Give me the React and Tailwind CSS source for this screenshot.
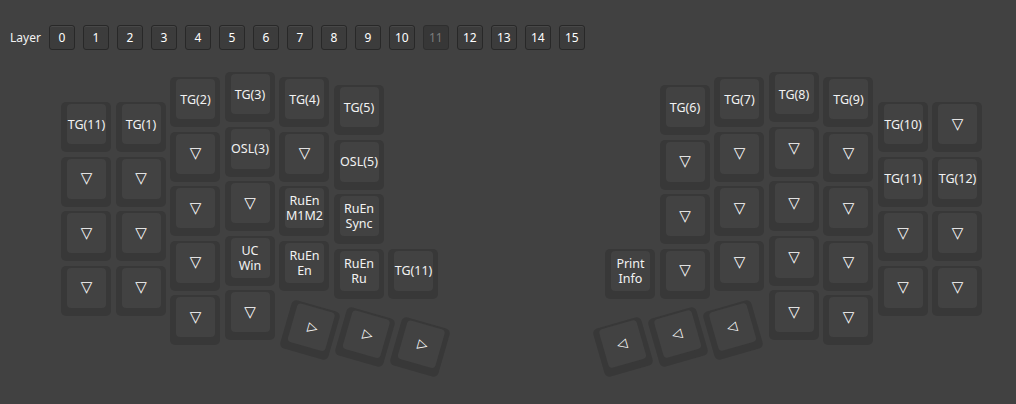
import React from "react";

const LEFT = [
  [61, [[102, "TG(11)"], [156.5, "▽"], [211, "▽"], [265.5, "▽"]]],
  [115.5, [[102, "TG(1)"], [156.5, "▽"], [211, "▽"], [265.5, "▽"]]],
  [170, [[77, "TG(2)"], [131.5, "▽"], [186, "▽"], [240.5, "▽"], [295, "▽"]]],
  [224.5, [[72, "TG(3)"], [126.5, "OSL(3)"], [181, "▽"], [235.5, "UC\nWin"], [290, "▽"]]],
  [279, [[77, "TG(4)"], [131.5, "▽"], [186, "RuEn\nM1M2"], [240.5, "RuEn\nEn"]]],
  [333.5, [[85, "TG(5)"], [139.5, "OSL(5)"], [194, "RuEn\nSync"], [248.5, "RuEn\nRu"]]],
  [388, [[248.5, "TG(11)"]]],
];

const RIGHT = [
  [605, [[248.5, "Print\nInfo"]]],
  [659.5, [[85, "TG(6)"], [139.5, "▽"], [194, "▽"], [248.5, "▽"]]],
  [714, [[77, "TG(7)"], [131.5, "▽"], [186, "▽"], [240.5, "▽"]]],
  [768.5, [[72, "TG(8)"], [126.5, "▽"], [181, "▽"], [235.5, "▽"], [290, "▽"]]],
  [823, [[77, "TG(9)"], [131.5, "▽"], [186, "▽"], [240.5, "▽"], [295, "▽"]]],
  [877.5, [[102, "TG(10)"], [156.5, "TG(11)"], [211, "▽"], [265.5, "▽"]]],
  [932, [[102, "▽"], [156.5, "TG(12)"], [211, "▽"], [265.5, "▽"]]],
];

const THUMBS = [
  { x: 285.3, y: 305, r: 16 },
  { x: 339.6, y: 312.3, r: 16 },
  { x: 395.3, y: 321.6, r: 16 },
  { x: 993 - 395.3, y: 321.6, r: -16 },
  { x: 993 - 339.6, y: 312.3, r: -16 },
  { x: 993 - 285.3, y: 305, r: -16 },
];

const TOP = 50;

function Label({ text, glyphRot }) {
  if (text === "▽") {
    return (
      <span
        className={
          glyphRot
            ? "block text-[13px] leading-[13px] text-white"
            : "block text-[15px] leading-[15px] text-white"
        }
        style={{
          fontFamily: '"DejaVu Sans", sans-serif',
          transform: glyphRot ? `rotate(${glyphRot}deg)` : undefined,
        }}
      >
        ▽
      </span>
    );
  }
  const lines = text.split("\n");
  return (
    <span className="flex flex-col items-center text-[12.5px] leading-[15px] text-[#f2f2f2]">
      {lines.map((l, i) => (
        <span key={i}>{l}</span>
      ))}
    </span>
  );
}

function Key({ x, y, text, rot, glyphRot }) {
  return (
    <div
      className="absolute w-[50px] h-[50px] rounded-[5px] bg-[#383838] pl-[6px] pt-[2px]"
      style={{
        left: x,
        top: y - TOP,
        transform: rot ? `rotate(${rot}deg)` : undefined,
      }}
    >
      <div className="w-[39px] h-[40px] rounded-[4px] bg-[#424242] flex items-center justify-center text-center">
        <Label text={text} glyphRot={glyphRot} />
      </div>
    </div>
  );
}

export default function App() {
  const layers = Array.from({ length: 16 }, (_, i) => i);
  return (
    <div
      className="w-[1016px] h-[404px] bg-[#414141] flex flex-col overflow-hidden"
      style={{ fontFamily: '"Noto Sans", "DejaVu Sans", sans-serif' }}
    >
      <div className="flex items-center pl-[10px] pt-[25px] h-[50px] shrink-0">
        <span className="text-[12px] text-[#f2f2f2] mr-[8px]">Layer</span>
        <div className="flex gap-[8px]">
          {layers.map((n) =>
            n === 11 ? (
              <div
                key={n}
                className="w-[26px] h-[25px] rounded-[3px] border border-[#2e2e2e] bg-[#373737] flex items-center justify-center text-[12px] text-[#7c7c7c]"
              >
                {n}
              </div>
            ) : (
              <div
                key={n}
                className="w-[26px] h-[25px] rounded-[3px] border border-[#282828] bg-[#3c3c3c] shadow-[inset_0_1px_0_#484848] flex items-center justify-center text-[12px] text-white"
              >
                {n}
              </div>
            )
          )}
        </div>
      </div>
      <div className="relative flex-1">
        {[...LEFT, ...RIGHT].map(([x, keys]) =>
          keys.map(([y, t], i) => <Key key={`${x}-${i}`} x={x} y={y} text={t} />)
        )}
        {THUMBS.map((t, i) => (
          <Key
            key={`t${i}`}
            x={t.x}
            y={t.y}
            text="▽"
            rot={t.r}
            glyphRot={t.r > 0 ? -90 : 90}
          />
        ))}
      </div>
    </div>
  );
}
